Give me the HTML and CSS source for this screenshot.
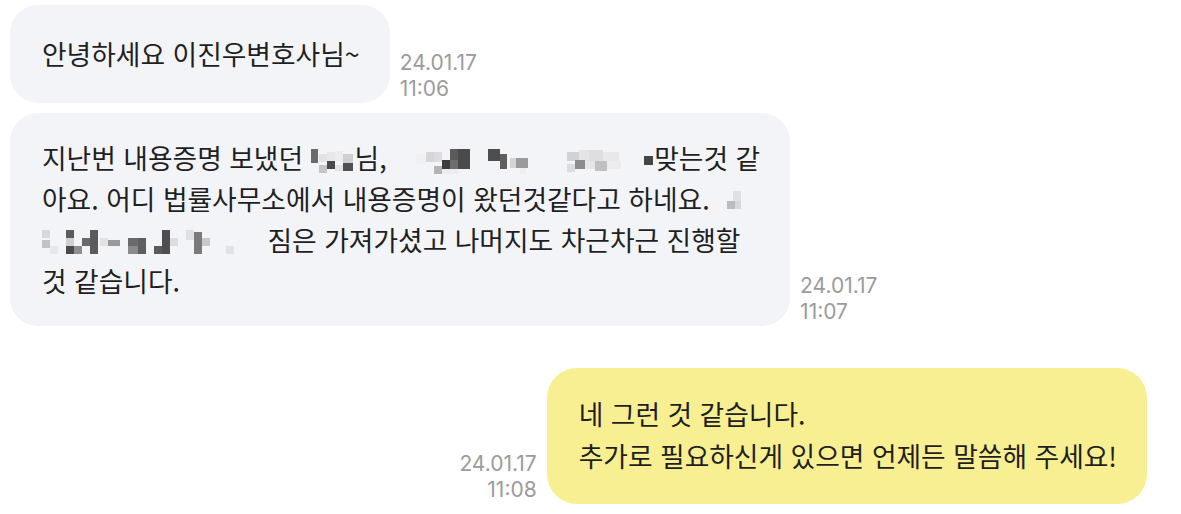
FILE: index.html
```html
<!DOCTYPE html>
<html lang="ko">
<head>
<meta charset="UTF-8">
<title>대화</title>
<link rel="stylesheet" href="styles.css">
</head>
<body>

<div class="chat">
    <div class="row">
        <div class="bubble other">안녕하세요 이진우변호사님~</div>
        <div class="time">24.01.17<br>11:06</div>
    </div>

    <div class="row">
        <div class="bubble other">
            지난번 내용증명 보냈던 <svg class="mosaic" width="44" height="28" viewBox="0 0 44 28">
                <rect x="0" y="3" width="7" height="14" fill="#6a6a6a"/>
                <rect x="8" y="8" width="8" height="8" fill="#e2e2e4"/>
                <rect x="16" y="6" width="8" height="9" fill="#e8e8ea"/>
                <rect x="16" y="15" width="8" height="8" fill="#4a4a4a"/>
                <rect x="8" y="19" width="8" height="8" fill="#c4c4c6"/>
                <rect x="24" y="5" width="8" height="10" fill="#ececee"/>
                <rect x="32" y="8" width="10" height="9" fill="#cfcfd2"/>
                <rect x="32" y="17" width="10" height="8" fill="#505050"/>
                <rect x="24" y="19" width="8" height="6" fill="#e4e4e6"/>
            </svg>님, <svg class="mosaic" width="260" height="28" viewBox="0 0 260 28">
                <rect x="22" y="8" width="10" height="10" fill="#f0f0f3"/>
                <rect x="32" y="6" width="8" height="10" fill="#d6d6d8"/>
                <rect x="40" y="6" width="8" height="10" fill="#dcdcde"/>
                <rect x="48" y="14" width="8" height="9" fill="#3c3c3c"/>
                <rect x="56" y="3" width="8" height="11" fill="#5a5a5a"/>
                <rect x="64" y="3" width="12" height="20" fill="#4a4a4a"/>
                <rect x="56" y="14" width="8" height="9" fill="#6e6e6e"/>
                <rect x="40" y="20" width="8" height="8" fill="#b4b4b6"/>
                <rect x="48" y="23" width="16" height="5" fill="#ececee"/>
                <rect x="94" y="3" width="12" height="12" fill="#4e4e4e"/>
                <rect x="106" y="8" width="7" height="15" fill="#5e5e5e"/>
                <rect x="116" y="12" width="6" height="10" fill="#d4d4d6"/>
                <rect x="122" y="12" width="12" height="10" fill="#9a9a9c"/>
                <rect x="126" y="22" width="6" height="6" fill="#eeeef0"/>
                <rect x="173" y="6" width="12" height="9" fill="#d2d2d4"/>
                <rect x="185" y="4" width="10" height="11" fill="#e4e4e6"/>
                <rect x="181" y="14" width="10" height="9" fill="#8c8c8e"/>
                <rect x="195" y="4" width="14" height="11" fill="#dedee0"/>
                <rect x="191" y="15" width="10" height="8" fill="#e6e6e8"/>
                <rect x="201" y="15" width="12" height="10" fill="#c0c0c2"/>
                <rect x="209" y="6" width="16" height="9" fill="#e8e8ea"/>
                <rect x="213" y="15" width="14" height="8" fill="#ececee"/>
                <rect x="173" y="18" width="8" height="8" fill="#dcdcde"/>
                <rect x="250" y="10" width="9" height="9" fill="#454545"/>
            </svg>맞는것 같<br>
            아요. 어디 법률사무소에서 내용증명이 왔던것같다고 하네요. <svg class="mosaic" width="26" height="28" viewBox="0 0 26 28">
                <rect x="16" y="4" width="8" height="10" fill="#e0e0e2"/>
                <rect x="10" y="14" width="8" height="8" fill="#bcbcbe"/>
                <rect x="18" y="14" width="6" height="8" fill="#d8d8da"/>
            </svg><br>
            <svg class="mosaic" width="218" height="28" viewBox="0 0 218 28">
                <rect x="0" y="2" width="8" height="8" fill="#d8d8da"/>
                <rect x="0" y="12" width="8" height="8" fill="#c2c2c4"/>
                <rect x="8" y="18" width="8" height="8" fill="#e8e8ea"/>
                <rect x="24" y="2" width="8" height="8" fill="#5c5c5c"/>
                <rect x="24" y="10" width="8" height="8" fill="#d0d0d2"/>
                <rect x="24" y="18" width="8" height="8" fill="#4a4a4a"/>
                <rect x="32" y="18" width="8" height="8" fill="#8e8e90"/>
                <rect x="40" y="10" width="8" height="8" fill="#6a6a6a"/>
                <rect x="48" y="2" width="8" height="24" fill="#5a5a5a"/>
                <rect x="58" y="10" width="8" height="8" fill="#e2e2e4"/>
                <rect x="66" y="12" width="12" height="6" fill="#9a9a9c"/>
                <rect x="86" y="10" width="10" height="10" fill="#6a6a6a"/>
                <rect x="86" y="18" width="10" height="8" fill="#8a8a8c"/>
                <rect x="96" y="10" width="8" height="16" fill="#5e5e5e"/>
                <rect x="112" y="18" width="8" height="8" fill="#5a5a5a"/>
                <rect x="120" y="2" width="8" height="24" fill="#4e4e4e"/>
                <rect x="128" y="10" width="8" height="8" fill="#dcdcde"/>
                <rect x="144" y="2" width="8" height="10" fill="#e0e0e2"/>
                <rect x="152" y="4" width="8" height="22" fill="#7a7a7c"/>
                <rect x="160" y="10" width="8" height="8" fill="#c8c8ca"/>
                <rect x="184" y="18" width="8" height="8" fill="#e2e2e4"/>
            </svg> 짐은 가져가셨고 나머지도 차근차근 진행할<br>
            것 같습니다.
        </div>
        <div class="time">24.01.17<br>11:07</div>
    </div>

    <div class="row mine">
        <div class="time right">24.01.17<br>11:08</div>
        <div class="bubble me">네 그런 것 같습니다.<br>추가로 필요하신게 있으면 언제든 말씀해 주세요!</div>
    </div>
</div>

</body>
</html>
```
FILE: styles.css
```css
body {
    margin: 0;
    background-color: #ffffff;
    font-family: "Noto Sans CJK KR", "Noto Sans", sans-serif;
    color: #1f1f1f;
}
.chat {
    display: flex;
    flex-direction: column;
    gap: 10px;
    padding: 5px 34px 0 10px;
}
.row {
    display: flex;
    align-items: flex-end;
    gap: 10px;
}
.row.mine {
    justify-content: flex-end;
    margin-top: 32px;
}
.bubble {
    font-size: 26.75px;
    line-height: 41px;
    border-radius: 28px;
    white-space: nowrap;
}
.bubble.other {
    background-color: #f3f4f8;
    padding: 28px 30px 29px 32px;
}
.row + .row .bubble.other {
    padding: 24px 30px 25px 32px;
}
.bubble.me {
    background-color: #f8ef93;
    padding: 25px 30px 27px 32px;
    line-height: 42px;
    border-radius: 30px;
}
.mosaic {
    vertical-align: -5px;
}
.time {
    font-family: Inter, "Noto Sans", sans-serif;
    font-size: 21px;
    line-height: 26px;
    color: #9b9b9d;
    margin-bottom: 1px;
    white-space: nowrap;
}
.time.right {
    text-align: right;
}
```
